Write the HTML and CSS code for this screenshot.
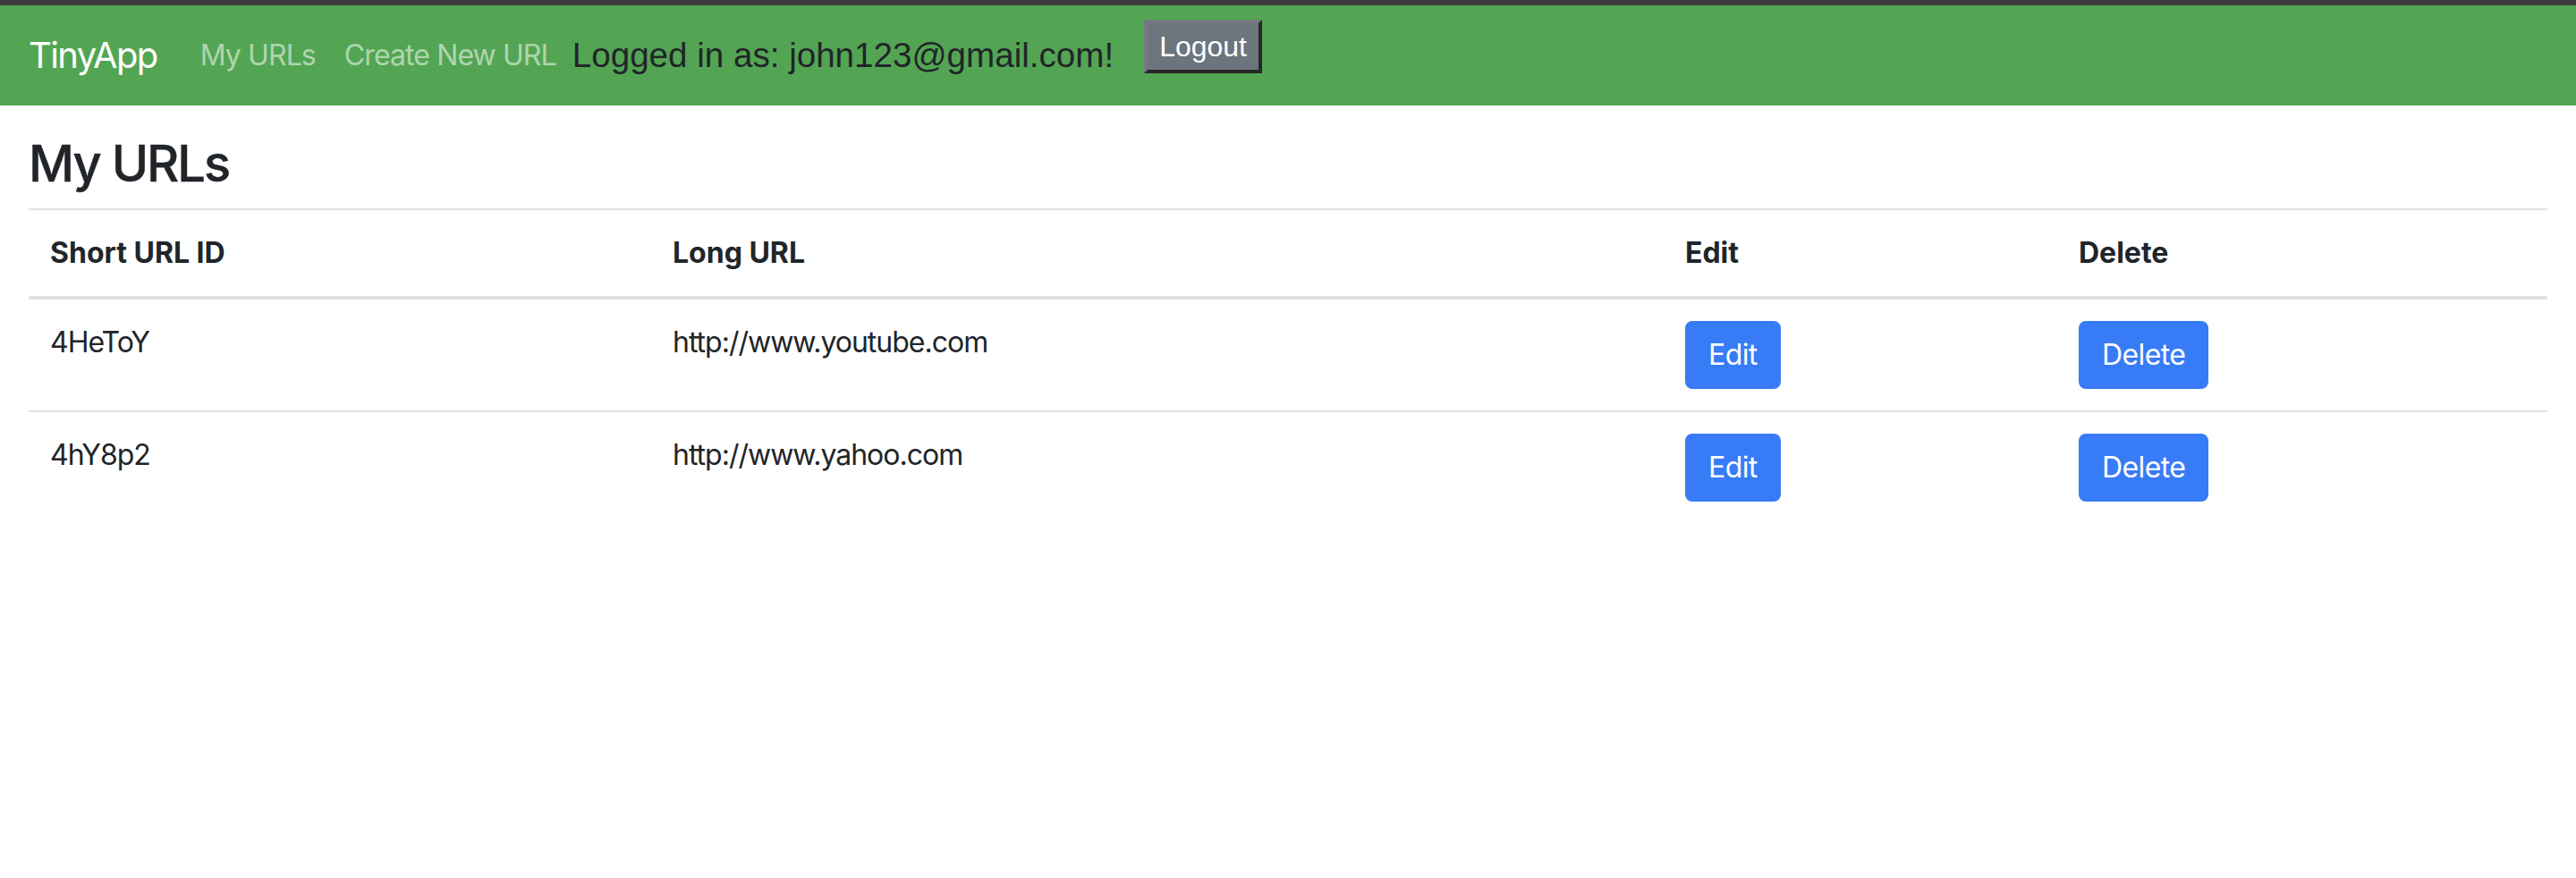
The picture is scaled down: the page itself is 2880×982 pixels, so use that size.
FILE: index.html
```html
<!DOCTYPE html>
<html lang="en">
<head>
<meta charset="utf-8">
<title>TinyApp</title>
<link rel="stylesheet" href="styles.css">
</head>
<body>
<nav class="navbar">
  <a class="brand" href="#">TinyApp</a>
  <ul class="nav">
    <li><a class="nav-link" href="#">My URLs</a></li>
    <li><a class="nav-link" href="#">Create New URL</a></li>
  </ul>
  <span class="logged">Logged in as: john123@gmail.com!</span>
  <form class="logout-form">
    <button class="logout" type="button">Logout</button>
  </form>
</nav>
<main class="container">
  <h3 class="title">My URLs</h3>
  <table class="table">
    <thead>
      <tr>
        <th class="col-short">Short URL ID</th>
        <th class="col-long">Long URL</th>
        <th class="col-edit">Edit</th>
        <th class="col-delete">Delete</th>
      </tr>
    </thead>
    <tbody>
      <tr>
        <td>4HeToY</td>
        <td>http://www.youtube.com</td>
        <td><button class="btn" type="button">Edit</button></td>
        <td><button class="btn" type="button">Delete</button></td>
      </tr>
      <tr>
        <td>4hY8p2</td>
        <td>http://www.yahoo.com</td>
        <td><button class="btn" type="button">Edit</button></td>
        <td><button class="btn" type="button">Delete</button></td>
      </tr>
    </tbody>
  </table>
</main>
</body>
</html>
```
FILE: styles.css
```css
* { box-sizing: border-box; }

html, body {
  margin: 0;
  padding: 0;
  background: #ffffff;
}

body {
  font-family: Inter, "Noto Sans", "Liberation Sans", sans-serif;
  font-size: 32px;
  line-height: 1.5;
  color: #212529;
}

.navbar {
  display: flex;
  align-items: center;
  height: 118px;
  padding: 16px 32px;
  background: #53a553;
  border-top: 6px solid #3d3d3d;
}

.brand {
  font-size: 40px;
  line-height: 60px;
  padding: 10px 0;
  margin-right: 32px;
  letter-spacing: -1.6px;
  color: #ffffff;
  text-decoration: none;
  white-space: nowrap;
}

.nav {
  display: flex;
  list-style: none;
  margin: 0;
  padding: 0;
}

.nav-link {
  display: block;
  padding: 16px;
  font-size: 32px;
  line-height: 48px;
  letter-spacing: -0.9px;
  color: rgba(255, 255, 255, 0.55);
  text-decoration: none;
  white-space: nowrap;
}

.logged {
  font-family: "Liberation Sans", Arial, sans-serif;
  font-size: 38.6px;
  line-height: 48px;
  color: #212529;
  white-space: nowrap;
  margin-left: 2px;
}

.logout-form {
  align-self: flex-start;
  margin: 0 0 0 34px;
}

.logout {
  font-family: "Liberation Sans", Arial, sans-serif;
  font-size: 32px;
  line-height: 37px;
  padding: 8px 13px 7px;
  color: #ffffff;
  background: #6c757d;
  border-style: solid;
  border-width: 4px;
  border-color: #737a82 #262626 #262626 #737a82;
  border-radius: 0;
  display: block;
}

.container {
  padding: 0 32px;
}

.title {
  font-size: 56px;
  font-weight: 500;
  line-height: 1.2;
  letter-spacing: -2px;
  -webkit-text-stroke: 0.4px #212529;
  margin: 32px 0 16px;
  color: #212529;
}

.table {
  width: 100%;
  border-collapse: collapse;
  table-layout: fixed;
  color: #212529;
}

.table th,
.table td {
  padding: 24px;
  text-align: left;
  vertical-align: top;
  border-top: 2px solid #dee2e6;
}

.table td {
  letter-spacing: -1px;
}

.table thead th {
  font-weight: 700;
  vertical-align: bottom;
  border-bottom: 4px solid #dee2e6;
}

.col-short { width: 696px; }
.col-long { width: 1132px; }
.col-edit { width: 440px; }
.col-delete { width: 548px; }

.btn {
  font-family: inherit;
  font-size: 32px;
  line-height: 48px;
  padding: 12px 24px;
  letter-spacing: -0.6px;
  color: #ffffff;
  background: #387bf6;
  border: 2px solid #387bf6;
  border-radius: 8px;
  display: inline-block;
}
```
